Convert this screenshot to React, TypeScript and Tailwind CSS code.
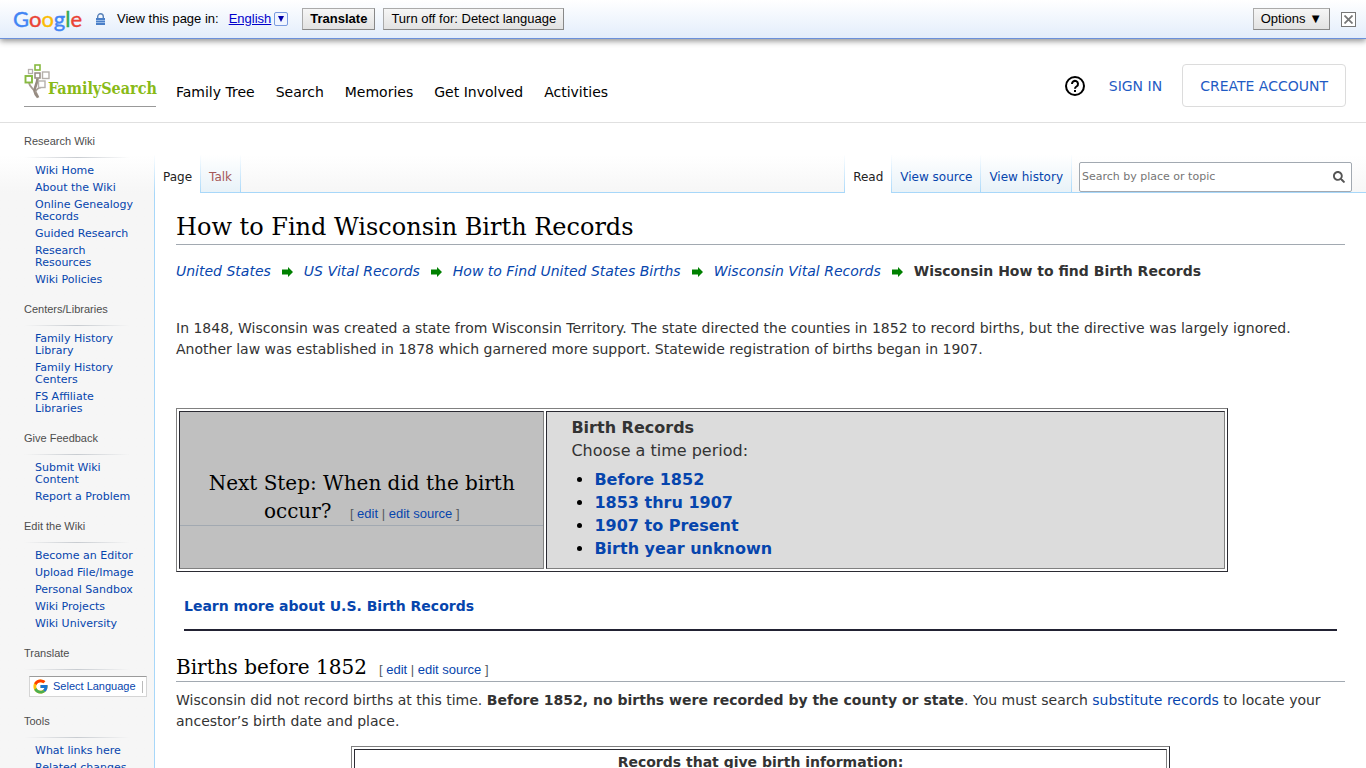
import React from 'react'
import { FcGoogle } from 'react-icons/fc'
import { FaSearch } from 'react-icons/fa'

interface SidebarGroup {
  title: string;
  links: string[];
}

const topGroups: SidebarGroup[] = [
  {
    title: 'Research Wiki',
    links: ['Wiki Home', 'About the Wiki', 'Online Genealogy Records', 'Guided Research', 'Research Resources', 'Wiki Policies'],
  },
  {
    title: 'Centers/Libraries',
    links: ['Family History Library', 'Family History Centers', 'FS Affiliate Libraries'],
  },
  {
    title: 'Give Feedback',
    links: ['Submit Wiki Content', 'Report a Problem'],
  },
  {
    title: 'Edit the Wiki',
    links: ['Become an Editor', 'Upload File/Image', 'Personal Sandbox', 'Wiki Projects', 'Wiki University'],
  },
]

const toolsGroup: SidebarGroup = {
  title: 'Tools',
  links: ['What links here', 'Related changes'],
}

const navItems = ['Family Tree', 'Search', 'Memories', 'Get Involved', 'Activities']
const breadcrumbs = ['United States', 'US Vital Records', 'How to Find United States Births', 'Wisconsin Vital Records']
const periods = ['Before 1852', '1853 thru 1907', '1907 to Present', 'Birth year unknown']

const toolbarButton =
  'h-[22px] whitespace-nowrap border border-[#aaa] border-r-[#888] border-b-[#888] bg-linear-to-b from-[#f6f6f6] to-[#e2e2e2] px-[7px] text-[13px] leading-5 text-black'

const TranslateToolbar: React.FC = () => (
  <div className="relative flex h-[39px] items-center border-b border-[#6b90da] bg-linear-to-b from-white to-[#e3edfb] pl-[13px] pr-2.5 font-['Liberation_Sans',Arial,sans-serif] text-[13px] text-black shadow-[0_2px_6px_rgba(0,0,0,0.45)]">
    <div className="w-[82px] font-['Lato',sans-serif] text-[22px] leading-6 [-webkit-text-stroke:0.4px]" aria-label="Google">
      <span className="text-[#4285f4]">G</span>
      <span className="text-[#ea4335]">o</span>
      <span className="text-[#fbbc05]">o</span>
      <span className="text-[#4285f4]">g</span>
      <span className="text-[#34a853]">l</span>
      <span className="text-[#ea4335]">e</span>
    </div>
    <svg width="11" height="13" viewBox="0 0 11 13" className="mr-[11px]">
      <path d="M2.7 6V3.6a2.8 2.8 0 0 1 5.6 0V6" fill="none" stroke="#5a82b8" strokeWidth="1.4" />
      <rect x="1" y="5" width="9" height="7" fill="#4a7fc8" />
      <path d="M1 7.5h9M1 9.5h9" stroke="#a9c6ec" strokeWidth="0.8" />
    </svg>
    <span>View this page in:</span>
    <a href="#" className="ml-2.5 flex items-center text-[#0000cc]">
      <span className="underline">English</span>
      <span className="ml-[3px] flex h-3.5 w-3.5 items-center justify-center rounded-[2px] border border-[#7a9be0] bg-[#f0f5ff]">
        <svg width="6" height="6" viewBox="0 0 6 6"><path d="M0 0h6L3 6z" fill="#0000aa" /></svg>
      </span>
    </a>
    <button className={`${toolbarButton} ml-3.5 font-bold`}>Translate</button>
    <button className={`${toolbarButton} ml-2`}>Turn off for: Detect language</button>
    <button className={`${toolbarButton} ml-auto`}>Options ▼</button>
    <button className="ml-[11px] flex h-[15px] w-[15px] items-center justify-center border border-[#777] bg-white" aria-label="Close">
      <svg width="9" height="9" viewBox="0 0 9 9"><path d="M0.5 0.5l8 8M8.5 0.5l-8 8" stroke="#777" strokeWidth="1.8" /></svg>
    </button>
  </div>
)

const Logo: React.FC = () => (
  <a href="#" className="flex h-[43px] w-[132px] items-start border-b border-[#999]">
    <svg width="26" height="36" viewBox="0 0 26 36" className="shrink-0" fill="none">
      <path d="M5 19c1 6 7 6 9.500 14.500" stroke="#a79d94" strokeWidth="1.8" />
      <path d="M13.500 14.500c0 6-3.500 8-2.800 13 .4 2.500 1.500 4 3.300 6" stroke="#958a80" strokeWidth="2.6" />
      <path d="M17 23.500c-3 .5-5 2-5.500 5" stroke="#a79d94" strokeWidth="1.500" />
      <rect x="11" y="1" width="5" height="5" stroke="#87b940" strokeWidth="1.600" />
      <rect x="4.500" y="5.500" width="4" height="4" stroke="#b5b0ab" strokeWidth="1.300" />
      <rect x="11" y="9" width="5" height="5" stroke="#958a80" strokeWidth="1.500" fill="#fff" />
      <rect x="18.500" y="8" width="6.500" height="6.500" stroke="#b5b0ab" strokeWidth="1.400" />
      <rect x="1.500" y="12" width="6.500" height="6.500" stroke="#87b940" strokeWidth="1.900" fill="#fff" />
      <rect x="14.500" y="17" width="6.500" height="6.500" stroke="#b5b0ab" strokeWidth="1.400" fill="#fff" />
    </svg>
    <span className="-ml-0.5 pt-[15px] font-['DejaVu_Serif_Condensed','DejaVu_Serif',serif] text-base font-bold leading-5 text-[#89ba17]">FamilySearch</span>
  </a>
)

const SiteHeader: React.FC = () => (
  <header className="flex h-[84px] items-start border-b border-[#e0e0e0] bg-white pl-6 pr-5 pt-[25px] text-sm">
    <Logo />
    <nav className="flex gap-[21px] pl-5 pt-[18px] leading-5 text-black">
      {navItems.map((item) => (
        <a key={item} href="#" className="whitespace-nowrap">{item}</a>
      ))}
    </nav>
    <div className="ml-auto flex items-center">
      <button aria-label="Help">
        <svg width="20" height="20" viewBox="0 0 20 20" fill="none" stroke="#000" strokeWidth="2">
          <circle cx="10" cy="10" r="9" />
          <path d="M7 8a3 3 0 1 1 4.800 2.300C10.500 11.200 10 11.600 10 12.700" />
          <path d="M10 14v2" />
        </svg>
      </button>
      <a href="#" className="ml-6 text-[#1f5bc4]">SIGN IN</a>
      <button className="ml-5 h-[43px] rounded-[4px] border border-[#dcdcdc] bg-white px-[17px] text-[#1f5bc4]">CREATE ACCOUNT</button>
    </div>
  </header>
)

const SidebarHeading: React.FC<{ title: string }> = ({ title }) => (
  <>
    <h3 className="pl-6 font-['Liberation_Sans',Arial,sans-serif] text-[11px] leading-4 text-[#4d4d4d]">{title}</h3>
    <div className="ml-6 mr-6 mt-2 h-px bg-linear-to-r from-transparent via-[#c8ccd1] to-transparent" />
  </>
)

const SidebarSection: React.FC<SidebarGroup> = ({ title, links }) => (
  <section className="pb-2.5">
    <SidebarHeading title={title} />
    <ul className="pl-[35px] pr-5 pt-[7px] text-[11px] leading-3 text-[#0645ad]">
      {links.map((link) => (
        <li key={link} className="pb-[5px]"><a href="#">{link}</a></li>
      ))}
    </ul>
  </section>
)

const Sidebar: React.FC = () => (
  <aside className="w-[154px] shrink-0 pt-2.5">
    {topGroups.map((group) => (
      <SidebarSection key={group.title} {...group} />
    ))}
    <section className="pb-4">
      <SidebarHeading title="Translate" />
      <button className="ml-[29px] mt-1.5 flex h-[21px] w-[118px] items-center border border-[#d5d5d5] border-t-[#9b9b9b] bg-white pl-0.5 text-[#0645ad]">
        <FcGoogle size={17} />
        <span className="ml-1 whitespace-nowrap font-['Liberation_Sans',Arial,sans-serif] text-[11px]">Select Language</span>
        <span className="ml-1.5 h-3 w-px bg-[#bbb]" />
      </button>
    </section>
    <SidebarSection {...toolsGroup} />
  </aside>
)

// tab dividers fade out towards the top
const tabEdge = '[border-image:linear-gradient(#fff,#a7d7f9)_1]'

const Tab: React.FC<{ label: string; active?: boolean; missing?: boolean }> = ({ label, active, missing }) => (
  <a
    href="#"
    className={`flex h-[38px] items-center border-r px-2 pt-1.5 text-xs whitespace-nowrap ${tabEdge} ${
      active ? 'bg-white text-[#222]' : 'border-b bg-linear-to-b from-white to-[#e8f2f8]'
    } ${missing ? 'text-[#a55858]' : active ? '' : 'text-[#0645ad]'}`}
  >
    {label}
  </a>
)

const TabBar: React.FC = () => (
  <div className="flex h-[70px] items-end">
    <div className={`flex border-l ${tabEdge}`}>
      <Tab label="Page" active />
      <Tab label="Talk" missing />
    </div>
    <div className="h-px flex-1 bg-[#a7d7f9]" />
    <div className={`flex border-l ${tabEdge}`}>
      <Tab label="Read" active />
      <Tab label="View source" />
      <Tab label="View history" />
    </div>
    <div className="flex border-b border-[#a7d7f9] pl-[7px] pr-3.5">
      <form className="flex h-[30px] w-[273px] items-center rounded-[2px] border border-[#a2a9b1] bg-white pr-1.5">
        <input
          type="text"
          aria-label="Search by place or topic"
          placeholder="Search by place or topic"
          className="min-w-0 flex-1 pl-0.5 text-[11px] outline-none placeholder:text-[#757575]"
        />
        <button type="button" aria-label="Go"><FaSearch size={12} color="#555" /></button>
      </form>
    </div>
  </div>
)

const EditLinks: React.FC = () => (
  <span className="ml-3 whitespace-nowrap font-['Liberation_Sans',Arial,sans-serif] text-[13px] leading-4 text-[#54595d]">
    [ <a href="#" className="text-[#0645ad]">edit</a> | <a href="#" className="text-[#0645ad]">edit source</a> ]
  </span>
)

const Arrow: React.FC = () => (
  <svg width="11" height="12" viewBox="0 0 11 12" className="mx-[11px] shrink-0">
    <path d="M0 3.500h6V1l5 5-5 5V8.500H0z" fill="#008000" />
  </svg>
)

const tableClass =
  'border-separate border-spacing-[2px] border border-[#808080] border-b-[#2b2b33] border-r-[#2b2b33]'
const cellClass = 'border border-[#2b2b33] border-b-[#808080] border-r-[#808080]'

const Article: React.FC = () => (
  <main className="border-l border-[#a7d7f9] bg-white px-[21px] pb-10 pt-[18px] text-sm leading-[21px] text-[#333]">
    <h1 className="border-b border-[#a2a9b1] pb-px font-['DejaVu_Serif',serif] text-2xl leading-8 text-black">How to Find Wisconsin Birth Records</h1>
    <div className="mt-4 flex items-center whitespace-nowrap">
      {breadcrumbs.map((crumb) => (
        <React.Fragment key={crumb}>
          <a href="#" className="italic text-[#0645ad]">{crumb}</a>
          <Arrow />
        </React.Fragment>
      ))}
      <b>Wisconsin How to find Birth Records</b>
    </div>
    <p className="mt-9">
      In 1848, Wisconsin was created a state from Wisconsin Territory. The state directed the counties in 1852 to record births, but the directive was largely ignored. Another law was established in 1878 which garnered more support. Statewide registration of births began in 1907.
    </p>

    <table className={`${tableClass} mt-12 w-[90%]`}>
      <tbody>
        <tr>
          <td className={`${cellClass} w-[35%] bg-[#c0c0c0] text-center align-middle`}>
            <h2 className="mt-3.5 border-b border-[#a2a9b1] px-5 font-['DejaVu_Serif',serif] text-xl leading-7 text-black">
              Next Step: When did the birth occur? <EditLinks />
            </h2>
          </td>
          <td className={`${cellClass} bg-[#dcdcdc] pb-2 pl-6 pt-1 text-base leading-[23px]`}>
            <b>Birth Records</b>
            <p>Choose a time period:</p>
            <ul className="mt-1.5 list-disc pl-[23px] font-bold text-[#0645ad] marker:text-black">
              {periods.map((period) => (
                <li key={period}><a href="#">{period}</a></li>
              ))}
            </ul>
          </td>
        </tr>
      </tbody>
    </table>

    <div className="mx-2 mt-6 border-b-2 border-[#222233] pb-3">
      <a href="#" className="font-bold text-[#0645ad]">Learn more about U.S. Birth Records</a>
    </div>

    <h2 className="mt-[22px] border-b border-[#a2a9b1] font-['DejaVu_Serif',serif] text-xl leading-7 text-black">
      Births before 1852<EditLinks />
    </h2>
    <p className="mt-2">
      Wisconsin did not record births at this time. <b>Before 1852, no births were recorded by the county or state</b>. You must search <a href="#" className="text-[#0645ad]">substitute records</a> to locate your ancestor’s birth date and place.
    </p>

    <table className={`${tableClass} mx-auto mt-3.5 w-[70%]`}>
      <thead>
        <tr>
          <th className={`${cellClass} p-0.5 text-center`}>Records that give birth information:</th>
        </tr>
      </thead>
    </table>
  </main>
)

export default function App() {
  return (
    <div className="min-h-screen bg-[#f6f6f6] font-['DejaVu_Sans',Verdana,sans-serif]">
      <TranslateToolbar />
      <SiteHeader />
      <div className="flex bg-linear-to-b from-white from-[32px] to-[#f6f6f6] to-[70px]">
        <Sidebar />
        <div className="min-w-0 flex-1">
          <TabBar />
          <Article />
        </div>
      </div>
    </div>
  )
}
